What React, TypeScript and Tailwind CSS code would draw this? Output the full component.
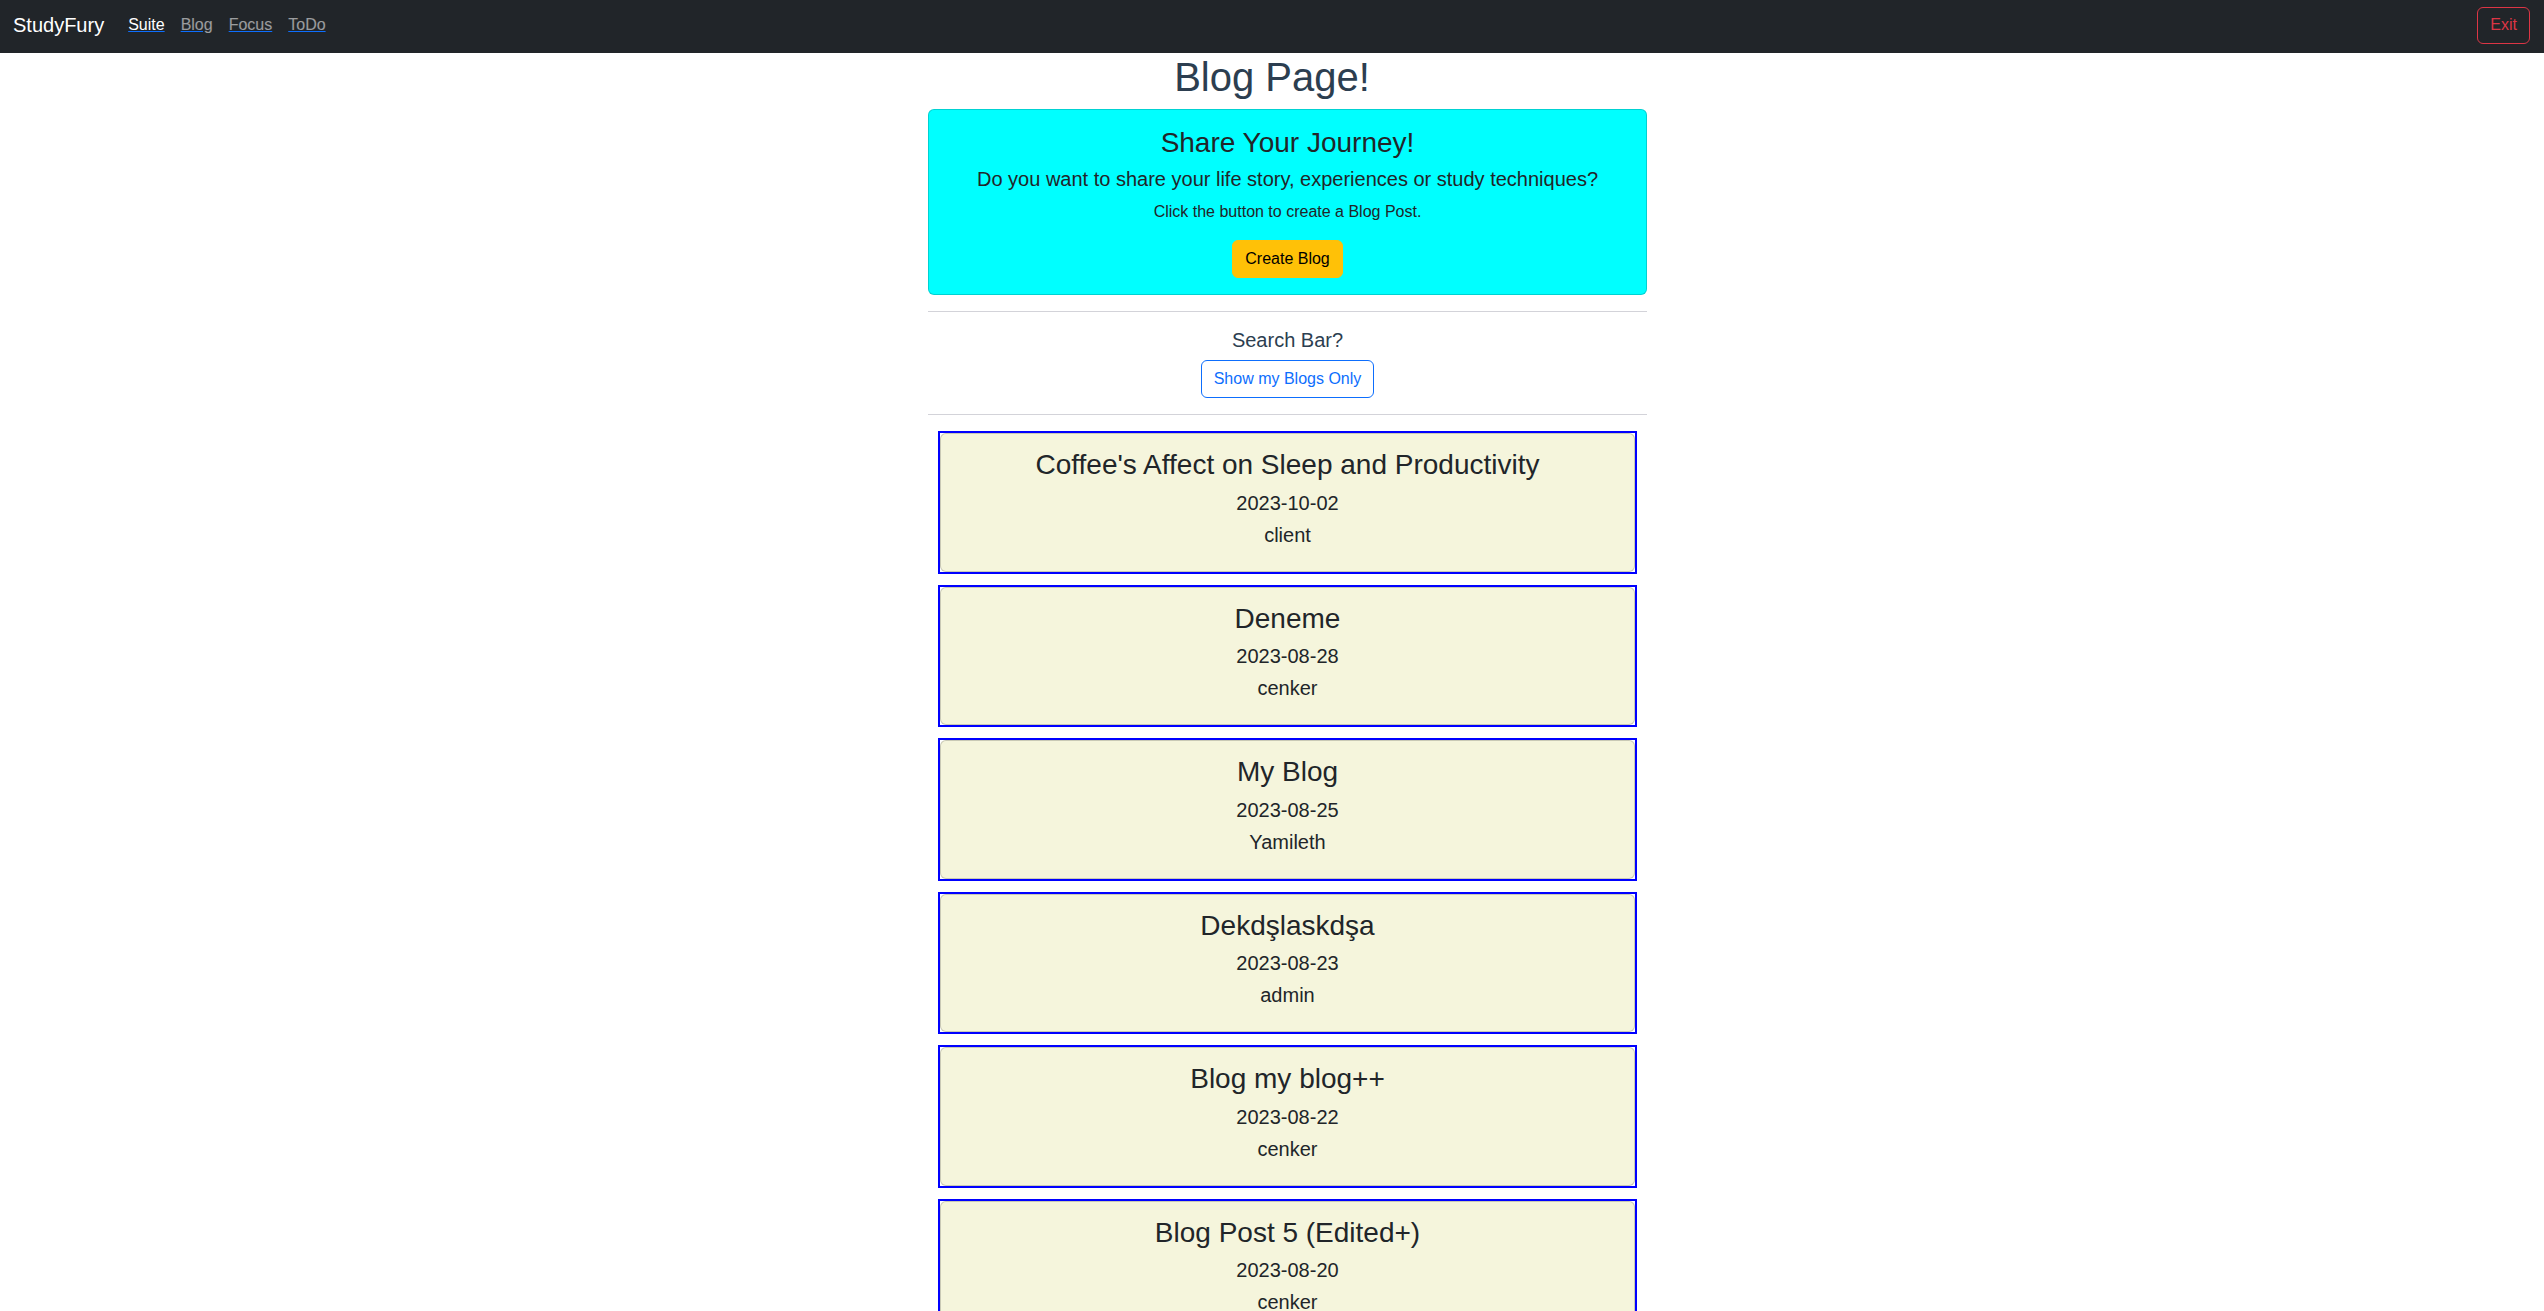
import React from "react";

interface Post {
  id: number;
  title: string;
  date: string;
  author: string;
}

const posts: Post[] = [
  { id: 1, title: "Coffee's Affect on Sleep and Productivity", date: "2023-10-02", author: "client" },
  { id: 2, title: "Deneme", date: "2023-08-28", author: "cenker" },
  { id: 3, title: "My Blog", date: "2023-08-25", author: "Yamileth" },
  { id: 4, title: "Dekdşlaskdşa", date: "2023-08-23", author: "admin" },
  { id: 5, title: "Blog my blog++", date: "2023-08-22", author: "cenker" },
  { id: 6, title: "Blog Post 5 (Edited+)", date: "2023-08-20", author: "cenker" },
];

function Navbar() {
  const links = ["Suite", "Blog", "Focus", "ToDo"];
  return (
    <nav className="h-[53px] bg-[#212529] flex items-center justify-between pl-[13px] pr-[14px] pb-[3px]">
      <div className="flex items-center">
        <a className="text-white text-[20px] leading-[30px] mr-4">StudyFury</a>
        {links.map((l, i) => (
          <a
            key={l}
            href="#"
            className={
              "px-2 text-[16px] leading-6 underline decoration-[#0d6efd] " +
              (i === 0 ? "text-white" : "text-white/55")
            }
          >
            {l}
          </a>
        ))}
      </div>
      <button className="h-[37px] px-3 text-[16px] leading-6 text-[#dc3545] border border-[#dc3545] rounded-md">
        Exit
      </button>
    </nav>
  );
}

function BlogCard({ post }: { post: Post }) {
  return (
    <div className="mx-[10px] mb-[11px] border-2 border-[#0000ff]">
      <div className="bg-[#f5f5dc] border border-black/[0.175] rounded-md pt-[14px] pb-4 px-4 text-[#212529]">
        <h3 className="text-[28px] leading-[34.5px] mb-[8px]">{post.title}</h3>
        <h5 className="text-[20px] leading-6 mb-2">{post.date}</h5>
        <h5 className="text-[20px] leading-6 mb-2">{post.author}</h5>
      </div>
    </div>
  );
}

export default function App() {
  return (
    <div className="min-h-screen bg-white text-center text-[#2c3e50] font-['Liberation_Sans',Arial,sans-serif]">
      <Navbar />
      <h1 className="text-[40px] leading-[48px] mb-2">Blog Page!</h1>
      <div className="flex justify-center pl-[31px]">
        <div className="w-[719px]">
          <div className="bg-[#00ffff] border border-black/[0.175] rounded-md p-4 text-[#212529]">
            <h3 className="text-[28px] leading-[34px] mb-[7px]">Share Your Journey!</h3>
            <p className="text-[20px] leading-6 mb-[9px]">
              Do you want to share your life story, experiences or study techniques?
            </p>
            <p className="text-[16px] leading-6 mb-4">Click the button to create a Blog Post.</p>
            <button className="h-[38px] px-3 text-[16px] leading-6 bg-[#ffc107] border border-[#ffc107] rounded-md text-black">
              Create Blog
            </button>
          </div>

          <hr className="my-4 border-t border-[#d3d3d9]" />
          <p className="text-[20px] leading-6 mb-2">Search Bar?</p>
          <button className="h-[38px] px-3 text-[16px] leading-6 text-[#0d6efd] border border-[#0d6efd] rounded-md">
            Show my Blogs Only
          </button>
          <hr className="my-4 border-t border-[#d3d3d9]" />

          <div>
            {posts.map((p) => (
              <BlogCard key={p.id} post={p} />
            ))}
          </div>
        </div>
      </div>
    </div>
  );
}
